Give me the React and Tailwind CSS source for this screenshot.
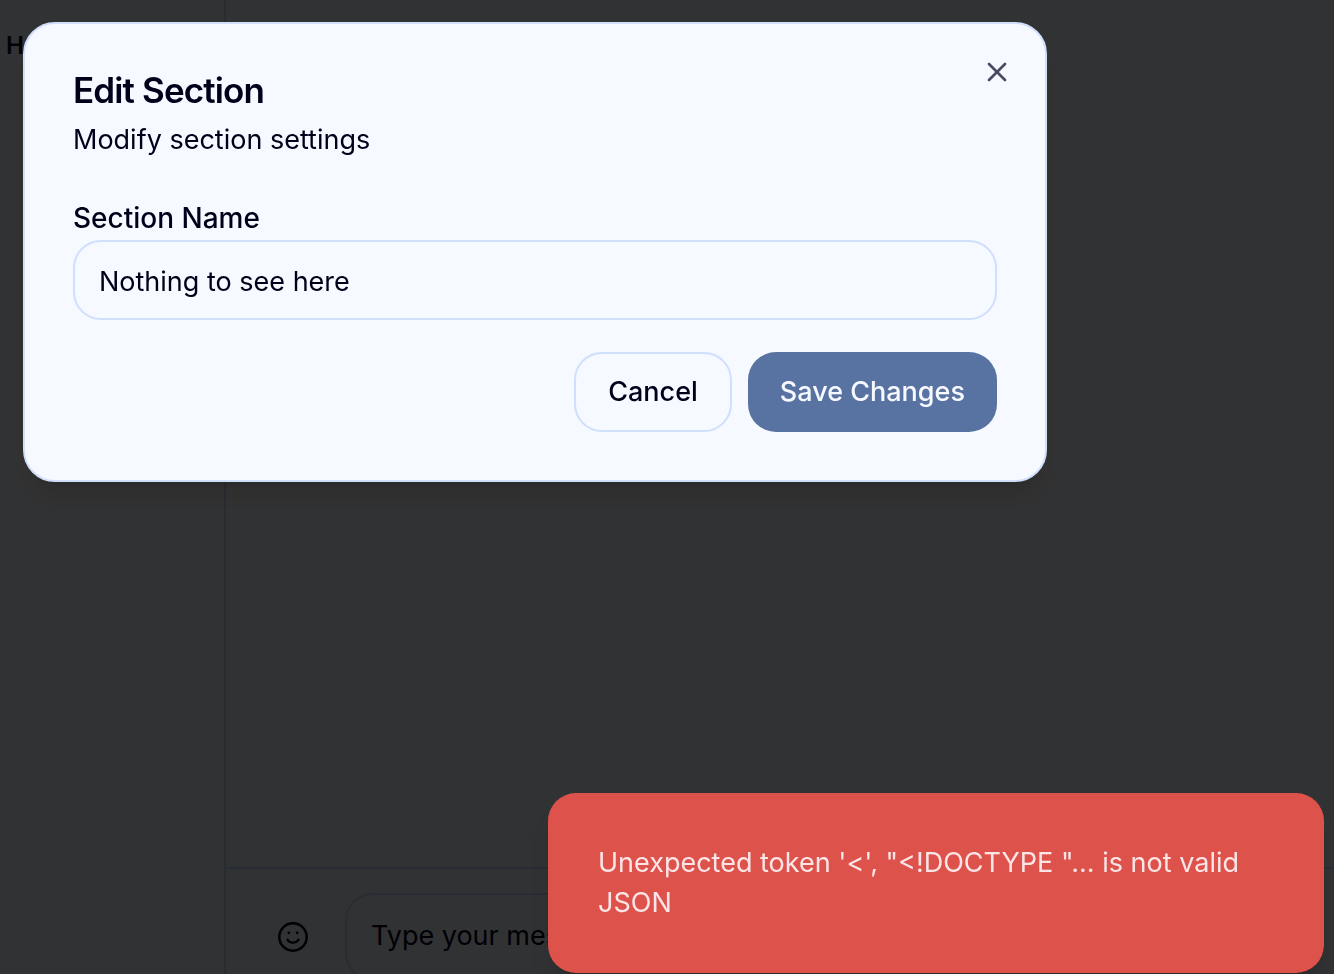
import { X } from "lucide-react";

function FaceIcon() {
  return (
    <svg viewBox="0 0 32 32" className="size-8" fill="none" stroke="currentColor" strokeLinecap="round" aria-hidden="true">
      <circle cx="16" cy="16" r="13.7" strokeWidth="2.5" />
      <circle cx="11.8" cy="11.8" r="1.35" fill="currentColor" stroke="none" />
      <circle cx="20.2" cy="11.8" r="1.35" fill="currentColor" stroke="none" />
      <path d="M10.6 18.8C11.8 20.6 13.8 21.6 16 21.6S20.2 20.6 21.4 18.8" strokeWidth="2.4" />
    </svg>
  );
}

function Composer() {
  return (
    <form className="flex h-[107px] shrink-0 items-start gap-3 border-t-2 border-[#c9dcff] pt-6 pr-2.5 pl-[27px]">
      <button type="button" aria-label="Insert emoji" className="grid h-22 w-20 shrink-0 place-items-center">
        <FaceIcon />
      </button>
      <input
        aria-label="Message"
        placeholder="Type your message..."
        className="h-22 min-w-0 flex-1 rounded-[28px] border-2 border-[#c9dcff] bg-transparent px-6 pb-1 text-[#00001a] placeholder:text-[#00001a]"
      />
      <button type="button" aria-label="Send" className="h-20 w-24 shrink-0 rounded-[28px] bg-[#305089]" />
    </form>
  );
}

function EditSectionDialog() {
  return (
    <section
      role="dialog"
      aria-labelledby="dialog-title"
      className="relative mt-[22px] ml-[23px] w-[1024px] max-w-full rounded-[32px] border-2 border-[#cfdffc] bg-[#f6f9ff] p-12 shadow-xl"
    >
      <button type="button" aria-label="Close" className="absolute top-8 right-8 grid size-8 place-items-center text-[#4a4a63]">
        <X className="size-8" />
      </button>
      <h2 id="dialog-title" className="text-[35px] leading-9 font-semibold tracking-tight">
        Edit Section
      </h2>
      <p className="mt-3 leading-10">Modify section settings</p>
      <form className="mt-11 flex flex-col">
        <label htmlFor="section-name" className="text-[28px] leading-7 font-medium">
          Section Name
        </label>
        <input
          id="section-name"
          defaultValue="Nothing to see here"
          className="mt-2 h-20 w-full rounded-[28px] border-2 border-[#cfdffc] bg-transparent px-6 pt-0.5 outline-none"
        />
        <div className="mt-8 flex justify-end gap-4">
          <button type="button" className="h-20 rounded-[28px] border-2 border-[#cfdffc] px-8 font-medium">
            Cancel
          </button>
          <button type="button" className="h-20 rounded-[28px] bg-[#5872a1] px-8 font-medium text-[#f6f9ff]">
            Save Changes
          </button>
        </div>
      </form>
    </section>
  );
}

export default function App() {
  return (
    <div className="h-screen overflow-hidden bg-[#f6f9ff] font-['Inter',sans-serif] text-[27px] text-[#00001a]">
      <div className="flex h-full">
        <aside className="w-[226px] shrink-0 border-r-2 border-[#c9dcff] px-1.5 pt-8">
          <h3 className="text-2xl leading-7 font-semibold">H</h3>
        </aside>
        <main className="flex min-w-0 flex-1 flex-col">
          <div className="flex-1" />
          <Composer />
        </main>
      </div>
      <div className="fixed inset-0 bg-black/80">
        <EditSectionDialog />
      </div>
      <div
        role="alert"
        className="fixed right-2.5 bottom-px w-[776px] max-w-full rounded-[28px] bg-[#de524c] p-[50px] leading-10 text-[#fbe5e6] shadow-xl"
      >
        Unexpected token '&lt;', "&lt;!DOCTYPE "... is not valid JSON
      </div>
    </div>
  );
}
